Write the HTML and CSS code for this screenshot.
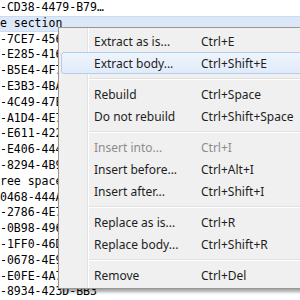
FILE: index.html
```html
<!DOCTYPE html>
<html lang="en">
<head>
    <meta charset="UTF-8">
    <title>Section list - context menu</title>
    <link rel="stylesheet" href="styles.css">
</head>
<body>
    <div class="list">
        <div class="row">-CD38-4479-B79…</div>
        <div class="row selected">e section</div>
        <div class="row">-7CE7-4561-9A2</div>
        <div class="row">-E285-4164-8B1</div>
        <div class="row">-B5E4-4F7A-A03</div>
        <div class="row">-E3B3-4BA2-91C</div>
        <div class="row">-4C49-47EB-B55</div>
        <div class="row">-A1D4-4E76-8D0</div>
        <div class="row">-E611-4227-A41</div>
        <div class="row">-E406-4444-9F3</div>
        <div class="row">-8294-4B95-87E</div>
        <div class="row">ree space</div>
        <div class="row">0468-444A-B2D</div>
        <div class="row">-2786-4E71-A6C</div>
        <div class="row">-0B98-4961-83F</div>
        <div class="row">-1FF0-46D2-9B7</div>
        <div class="row">-0678-4E95-A12</div>
        <div class="row">-E0FE-4A72-8C4</div>
        <div class="row">-8934-423D-BB3</div>
    </div>

    <div class="menu">
        <div class="item"><span>Extract as is...</span><span>Ctrl+E</span></div>
        <div class="item hover"><span>Extract body...</span><span>Ctrl+Shift+E</span></div>
        <div class="sep"></div>
        <div class="item"><span>Rebuild</span><span>Ctrl+Space</span></div>
        <div class="item"><span>Do not rebuild</span><span>Ctrl+Shift+Space</span></div>
        <div class="sep"></div>
        <div class="item disabled"><span>Insert into...</span><span>Ctrl+I</span></div>
        <div class="item"><span>Insert before...</span><span>Ctrl+Alt+I</span></div>
        <div class="item"><span>Insert after...</span><span>Ctrl+Shift+I</span></div>
        <div class="sep"></div>
        <div class="item"><span>Replace as is...</span><span>Ctrl+R</span></div>
        <div class="item"><span>Replace body...</span><span>Ctrl+Shift+R</span></div>
        <div class="sep"></div>
        <div class="item"><span>Remove</span><span>Ctrl+Del</span></div>
    </div>
</body>
</html>
```

FILE: styles.css
```css
* {
    margin: 0;
    padding: 0;
    box-sizing: border-box;
}

body {
    width: 300px;
    height: 300px;
    overflow: hidden;
    background: #ffffff;
    position: relative;
}

.list {
    font-family: 'DejaVu Sans Mono', 'Liberation Mono', monospace;
    font-size: 11.5px;
    color: #000000;
}

.row {
    height: 15.8px;
    line-height: 15.8px;
    white-space: nowrap;
    overflow: hidden;
}

.selected {
    background: #dce8f8;
    border-top: 1px solid #c9dcf5;
    border-bottom: 1px solid #c9dcf5;
    line-height: 13.8px;
}

.menu {
    position: absolute;
    left: 58px;
    top: 27px;
    width: 270px;
    padding: 2px;
    background: #f0f0f0;
    background-image: linear-gradient(to right, transparent 28px, #e2e3e3 28px, #e2e3e3 29px, #ffffff 29px, #ffffff 30px, transparent 30px);
    border: 1px solid #979797;
    box-shadow: 3px 3px 3px rgba(0, 0, 0, 0.35);
    font-family: 'Noto Sans', 'Open Sans', sans-serif;
    font-size: 12px;
    color: #1e1e1e;
}

.item {
    display: grid;
    grid-template-columns: 107px 1fr;
    height: 22px;
    line-height: 22px;
    padding-left: 32px;
    border: 1px solid transparent;
    border-radius: 3px;
    white-space: nowrap;
}

.hover {
    background: linear-gradient(#eef4fc, #e1ebf9);
    border-color: #b3cdef;
}

.disabled {
    color: #8d8d8d;
}

.sep {
    height: 9px;
    margin-left: 28px;
    background: linear-gradient(transparent 4px, #e0e0e0 4px, #e0e0e0 5px, #ffffff 5px, #ffffff 6px, transparent 6px);
}
```
